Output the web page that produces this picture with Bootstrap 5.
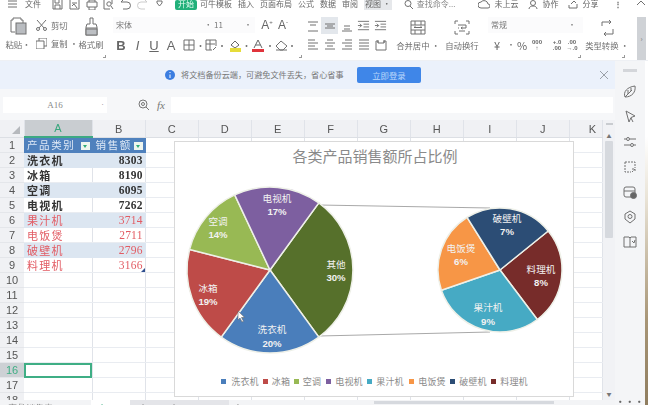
<!DOCTYPE html>
<html lang="zh"><head><meta charset="utf-8"><title>WPS 表格</title>
<link href="https://cdn.jsdelivr.net/npm/bootstrap@5.3.0/dist/css/bootstrap.min.css" rel="stylesheet">
<style>
html,body{width:648px;height:405px;overflow:hidden;margin:0;background:#fff}
body{font-family:"Noto Sans CJK SC","Liberation Sans",sans-serif;font-size:8px;color:#666;line-height:1}
.shell{width:648px;height:405px;filter:blur(.6px)}
.ic{fill:none;stroke:#707070;stroke-width:1;display:block;flex:none}
.topbar{height:10px;padding-left:8px;overflow:hidden;white-space:nowrap;align-items:flex-start;line-height:8px}
.tic{width:17px;display:flex;justify-content:center}
.tabon{width:22px;height:10px;background:#22b07a;color:#e8fff4;border-radius:2px;text-align:center;margin:0 3px 0 7px}
.tabs{gap:6px}
.hovertab{background:#e6e8eb;padding:0 1px;height:10px}
.ribbon{height:51px;border-bottom:1px solid #eef0f4}
.grp{position:relative;padding-top:7px;height:50px;flex:none}
.grp::after{content:"";position:absolute;right:2px;bottom:2px;width:3px;height:3px;border-right:1px solid #999;border-bottom:1px solid #999}
.g1{width:108px}.g2{width:196px;padding-left:5px}.g3{width:85px}.g3::after,.g4::after,.g5::after{display:none}
.g4{width:40px;margin-left:9px}.g5{width:36px;margin-left:6px}
.g6{width:95px;margin-left:8px}.g7{width:40px;margin-left:4px}
.vcol{display:flex;flex-direction:column;align-items:center}
.lab{font-size:8.4px;white-space:nowrap;color:#707070}
.paste{width:36px}.cutcol{width:42px;gap:7px;padding-top:3px}.brush{width:26px}
.cutrow{display:flex;align-items:center;gap:4px}
.fsel{height:16px;background:#fbfbfc;width:142px;padding:0 3px;display:flex;align-items:center;font-size:8px;color:#777}
.fgrow{height:16px;align-items:center}
.frow{margin-top:4px;height:16px;align-items:center}
.sq{display:flex;justify-content:center;align-items:center;height:16px;flex:none}
.w5{width:5px}.w3{width:3px}.w4{width:4px}.w6{width:6px}.w16{width:16px}.w17{width:17px}.w18{width:18px}.w20{width:20px}
.dot{font-size:9px;color:#777}
.big{font:700 13px "Liberation Sans",sans-serif;color:#666}
.thinbig{font-weight:400;font-size:12px}
.thinbig sup{font-size:6px;top:-3px}
.agrid{display:grid;grid-template-columns:repeat(5,17px);grid-auto-rows:17px;row-gap:2px;color:#707070}
.agrid div{display:flex;align-items:center;justify-content:center}
.agrid .on{background:#e3e7ec}
.numrow{height:16px;margin-top:4px;align-items:center;font-size:11px;color:#666}
.numrow span{flex:none;text-align:center}
.n1{width:20px;margin-left:-1px}.n2{width:7px;font-size:8px}.n3{width:18px;margin-left:-1px}
.tinynum{font:700 6px/6px "Liberation Sans",sans-serif;color:#666;text-align:center}
.n4{width:12px}.n5{width:16px;margin-left:6px}.n6{width:14px}
.handle{width:9px;height:43px;margin:7px 0 0 10px;background:#cfd2d6;color:#777;display:flex;align-items:center;justify-content:center;flex:none;font-size:7px}
.lower{height:344px}
.mainp{width:615px;flex:none}
.notice{height:28px;background:#ebf1fb;padding-left:165px;align-items:center}
.notice-t{font-size:8.15px;color:#777;margin:0 13px 0 6px;white-space:nowrap;width:163px}
.loginb{width:64px;height:16px;background:#3f86e8;color:#bcd8fb;border:0;border-radius:2px;font-size:8.4px;padding:0;line-height:16px}
.closex{margin-right:7px;stroke:#9aa0a8}
.formula{height:31px;background:#f6f7f9;padding:0 2px 0 3px;align-items:center}
.namebox{width:104px;height:16px;background:#fff;color:#888;font:9px "Liberation Serif",serif;position:relative;text-align:center;line-height:16px}
.namebox i{position:absolute;right:3px;top:0;font-style:normal;font-size:8px}
.zoomi{margin-left:31px;stroke:#777}
.fxi{font:italic 11px "Liberation Serif",serif;color:#777;margin:0 6px 0 8px}
.inputw{height:16px;background:#fff;flex:1}
.sheet{height:280px;position:relative;overflow:hidden}
.gridw{width:603px;overflow:hidden;flex:none}
.table.xl{table-layout:fixed;width:603px;border-collapse:collapse;margin:0;border:0;--bs-table-bg:transparent;font-size:11px}
.table.xl th,.table.xl td{padding:0;height:14.73px;line-height:14px;border:0;border-right:1px solid #e0e3e9;border-bottom:1px solid #e9ecf1;white-space:nowrap;overflow:hidden;box-shadow:none}
.table.xl thead th{height:17px;background:#f0f1f4;font:400 11px/16px "Liberation Sans",sans-serif;color:#555;text-align:center;border-bottom:1px solid #dcdfe4;border-right:1px solid #e0e3e9;position:relative}
.table.xl thead th.cura{background:#c9cdd1;color:#38a67d;border-bottom:2px solid #3da983}
.table.xl tbody th{background:#f0f1f4;font:400 11px/14px "Liberation Sans",sans-serif;color:#555;text-align:center;border-bottom:1px solid #e4e6ea;border-right:0}
.table.xl tbody th.curr{background:#cdd1d5;color:#3fae85}
.table.xl .hd{background:#4f81bd;color:#dfe9f6;padding-left:3px;letter-spacing:1.6px;font-size:10.5px;position:relative;border-color:#4f81bd}
.table.xl .hd u{position:absolute;right:2px;bottom:2px;width:9px;height:8px;background:#eef5ee;text-decoration:none}
.table.xl .hd u::after{content:"";position:absolute;left:2px;top:3px;border:2.5px solid transparent;border-top:3px solid #2faa78}
.table.xl .bd{font-weight:700;color:#333;padding-left:3px;letter-spacing:1.2px}
.table.xl .rd{color:#e25b63;padding-left:3px;letter-spacing:1.2px;font-weight:400}
.table.xl .nb{font:700 11.5px/14px "Liberation Serif",serif;color:#333;text-align:right;padding-right:2px;letter-spacing:.2px}
.table.xl .nr{font:400 11.5px/14px "Liberation Serif",serif;color:#e25b63;text-align:right;padding-right:2px;letter-spacing:.2px;position:relative}
.table.xl .crn::after{content:"";position:absolute;right:0;bottom:0;border:2px solid transparent;border-right-color:#2f4f8f;border-bottom-color:#2f4f8f}
.table.xl .st{background:#dce6f1;border-color:#dce6f1}
.table.xl .sel{outline:2px solid #3fae85;outline-offset:-2px}
.tri{position:absolute;right:4px;bottom:3px;width:0;height:0;border:4px solid transparent;border-right-color:#b6b9bd;border-bottom-color:#b6b9bd}
.table.xl thead th.kcol{padding-left:13px}
.vscroll{width:12px;background:#f1f2f5;flex:none;padding-top:3px;align-items:center;color:#777}
.grip{width:7px;height:2px;background:#c9ccd0;margin-bottom:8px}
.arr{font-size:5px;height:5px;line-height:5px}
.thumb{width:8px;height:97px;background:#d6d9de;margin-top:3px;border-radius:1px}
.sideb{width:30px;background:#f4f5f7;flex:none;padding-top:8px}
.sgrip{width:14px;height:3px;background:#d4d6da;margin-bottom:13px}
.sideicons{gap:11px}
.sdots{margin-top:auto;font-size:9px;line-height:6px;font-weight:700;color:#666;letter-spacing:.5px}
.photo{width:3px;flex:none;background:linear-gradient(#fff 22%,#e9e3d6 40%,#a89677 75%,#8f7d5f)}
.chart{position:absolute;left:174px;top:21px;width:400px;height:256px;background:#fff;border:1px solid #d9d9d9;box-sizing:border-box}
.chart svg{display:block;width:398px;height:254px}
.chart text{font-family:"Noto Sans CJK SC",sans-serif;text-anchor:middle}
.pl{font-size:9.6px;fill:#f2f2f2}
.chart text.pp{font:700 9.6px "Liberation Sans",sans-serif;fill:#f2f2f2}
.lg{font-size:9px;fill:#8a8a8a;letter-spacing:.2px}
.ttl{font-size:15px;fill:#8a8a8a}
.tabsbar{height:5px;background:#f3f4f6;overflow:hidden;align-items:flex-start;font:9px/12px "Liberation Sans",sans-serif;color:#888}
.tb1{width:91px;padding:2px 0 0 8px;white-space:nowrap;height:5px}
.tb2{width:39px;color:#3fae85;background:#fff;padding:2px 0 0 4px;height:5px}
.tb3{width:99px;background:#e4e5e9;padding:2px 0 0 6px;height:5px;white-space:nowrap}
.plus{padding:2px 0 0 6px;width:145px;font-size:10px;font-weight:700;height:5px}
.hbar{width:180px;height:3px;background:#d6d9de;margin-top:1px}
</style></head>
<body>
<div class="shell">
<svg width="0" height="0" class="position-absolute"><defs>
<symbol id="al1" viewBox="0 0 12 12"><path d="M1 2h10M3 5h6M1 11h10" fill="none" stroke="currentColor"/></symbol>
<symbol id="al2" viewBox="0 0 12 12"><path d="M1 4h10M3 6h6M1 8h10" fill="none" stroke="currentColor"/></symbol>
<symbol id="al3" viewBox="0 0 12 12"><path d="M3 6h6M3 9h6M1 11h10" fill="none" stroke="currentColor"/></symbol>
<symbol id="ind" viewBox="0 0 14 12"><path d="M1 1h12M7 4h6M7 7h6M1 10h12M1 5.500h4M3 3.500l2 2-2 2" fill="none" stroke="currentColor"/></symbol>
<symbol id="hl" viewBox="0 0 12 12"><path d="M1 1h7M1 4h10M1 7h7M1 10h10" fill="none" stroke="currentColor"/></symbol>
<symbol id="hc" viewBox="0 0 12 12"><path d="M3 1h6M1 4h10M3 7h6M1 10h10" fill="none" stroke="currentColor"/></symbol>
<symbol id="hr" viewBox="0 0 12 12"><path d="M4 1h7M1 4h10M4 7h7M1 10h10" fill="none" stroke="currentColor"/></symbol>
<symbol id="hj" viewBox="0 0 12 12"><path d="M1 1h10M1 4h10M1 7h10M1 10h10" fill="none" stroke="currentColor"/></symbol>
</defs></svg>

<div class="topbar d-flex">
<svg class="ic" width="9" height="8" viewBox="0 0 9 8"><path d="M0 1h9M0 4h9M0 7h9"/></svg>
<span class="ms-2">文件</span>
<span class="tic ms-2"><svg class="ic" width="11" height="10" viewBox="0 0 11 10"><path d="M1 0v9h9V0M3 9V5h5v4M3 0v3h4V0"/></svg></span>
<span class="tic"><svg class="ic" width="11" height="10" viewBox="0 0 11 10"><path d="M1 0v9h9V0M3 3h5M3 6l2-2 3 4"/></svg></span>
<span class="tic"><svg class="ic" width="12" height="10" viewBox="0 0 12 10"><path d="M1 2h10v5H1zM3 7v3h6V7M3 2V0h6v2"/></svg></span>
<span class="tic"><svg class="ic" width="11" height="10" viewBox="0 0 11 10"><path d="M1 0v9h6M9 0v4"/><circle cx="6" cy="4" r="2.200"/><path d="M8 6l2 3"/></svg></span>
<span class="tic"><svg class="ic" width="11" height="10" viewBox="0 0 11 10"><path d="M3 0L1 2h6a3 3 0 0 1 0 7H3"/></svg></span>
<span class="tic"><svg class="ic redo" width="11" height="10" viewBox="0 0 11 10"><path stroke="#ccc" d="M8 0l2 2H4a3 3 0 0 0 0 7h4"/></svg></span>
<span class="tic"><svg class="ic" width="7" height="7" viewBox="0 0 7 7"><path d="M1 1h5v2L3.500 6 1 3z"/></svg></span>
<span class="tabon">开始</span>
<div class="d-flex tabs"><span>可牛模板</span><span>插入</span><span>页面布局</span><span>公式</span><span>数据</span><span>审阅</span><span class="hovertab">视图 ·</span></div>
<svg class="ic" style="margin-left:12px" width="9" height="9" viewBox="0 0 9 9"><circle cx="4" cy="3.500" r="3"/><path d="M6 6l3 3"/></svg>
<span class="ms-1 text-black-50">查找命令...</span>
<svg class="ic" style="margin-left:23px" width="12" height="9" viewBox="0 0 12 9"><path d="M3 8a3 3 0 0 1 0-6 4 4 0 0 1 7 2 2 2 0 0 1 0 4z"/></svg>
<span class="ms-1">未上云</span>
<svg class="ic" style="margin-left:10px" width="10" height="9" viewBox="0 0 10 9"><circle cx="5" cy="3" r="2.500"/><path d="M1 9c0-4 8-4 8 0"/></svg>
<span class="ms-1">协作</span>
<svg class="ic" style="margin-left:10px" width="10" height="9" viewBox="0 0 10 9"><path d="M1 5v3h8V4M3 4l3-3 2 2"/></svg>
<span class="ms-1">分享</span>
<span class="fw-bold" style="margin-left:16px">⋮</span>
<svg class="ic" style="margin-left:14px" width="10" height="6" viewBox="0 0 10 6"><path d="M1 5l4-4 4 4"/></svg>
</div>

<div class="ribbon d-flex">
<div class="grp g1 d-flex">
 <div class="vcol paste"><svg class="ic mt-0" width="17" height="18" viewBox="0 0 17 18"><path d="M3 3H1v12h4M3 3V1h8v2h2v3"/><rect x="6" y="6" width="10" height="11" fill="#b9bcc0"/></svg><span class="lab" style="margin-top:5px">粘贴·</span></div>
 <div class="vcol cutcol align-items-start">
  <div class="cutrow"><svg class="ic" width="11" height="11" viewBox="0 0 11 11"><path d="M1 0l7 8M10 0L3 8"/><circle cx="2" cy="9" r="1.500"/><circle cx="9" cy="9" r="1.500"/></svg><span class="lab">剪切</span></div>
  <div class="cutrow"><svg class="ic" width="11" height="11" viewBox="0 0 11 11"><path d="M3 3V0h8v8H8M0 3h8v8H0z"/></svg><span class="lab">复制 ·</span></div>
 </div>
 <div class="vcol brush"><svg class="ic" width="13" height="19" viewBox="0 0 13 19"><path d="M5 1h3v6h3l1 3v8H1v-8l1-3h3zM1 11h11"/><rect x="1" y="12" width="11" height="6" fill="#bcbfc3"/></svg><span class="lab" style="margin-top:4px">格式刷</span></div>
</div>
<div class="grp g2">
 <div class="d-flex fgrow"><div class="fsel"><span>宋体</span><span class="ms-auto">· 11</span><span style="margin-left:21px">·</span></div>
  <span class="sq w16 big thinbig ms-1">A<sup>+</sup></span><span class="sq w16 big thinbig">A<sup>-</sup></span></div>
 <div class="d-flex frow">
  <span class="sq w16 big">B</span><span class="sq w17 big fst-italic fw-normal">I</span><span class="sq w16 big fw-normal text-decoration-underline">U</span><span class="sq w18 big fw-normal">A</span>
  <span class="sq w18"><svg class="ic" width="12" height="12" viewBox="0 0 12 12"><path d="M1 1h10v10H1zM6 1v10M1 6h10"/></svg></span><span class="sq w5 dot">·</span>
  <span class="sq w16"><svg class="ic" width="12" height="12" viewBox="0 0 12 12"><path d="M1 1h10v6M1 1v10h6M1 5h9M5 1v10"/><path d="M8 11l3-3"/></svg></span><span class="sq w6 dot">·</span>
  <span class="sq w20"><svg width="13" height="13" viewBox="0 0 13 13"><path d="M2 6l4-4 4 4-4 3z" fill="none" stroke="#666"/><rect x="1" y="9" width="11" height="4" fill="#e6dc3a"/></svg></span><span class="sq w3 dot">·</span>
  <span class="sq w20"><svg width="12" height="13" viewBox="0 0 12 13"><path d="M2 9l4-8 4 8M3.500 6h5" fill="none" stroke="#666"/><rect x="0" y="10" width="12" height="3" fill="#e0343c"/></svg></span><span class="sq w4 dot">·</span>
  <span class="sq w18"><svg class="ic" width="13" height="11" viewBox="0 0 13 11"><path d="M1 6l5-5 6 5-4 4H5zM1 10h11"/></svg></span><span class="sq w4 dot">·</span>
 </div>
</div>
<div class="grp g3"><div class="agrid">
 <div><svg width="12" height="12"><use href="#al1"/></svg></div><div class="on"><svg width="12" height="12"><use href="#al2"/></svg></div><div><svg width="12" height="12"><use href="#al3"/></svg></div><div><svg width="13" height="12"><use href="#ind"/></svg></div><div><svg width="13" height="12"><use href="#ind"/></svg></div>
 <div><svg width="12" height="12"><use href="#hl"/></svg></div><div><svg width="12" height="12"><use href="#hc"/></svg></div><div><svg width="12" height="12"><use href="#hr"/></svg></div><div><svg width="12" height="12"><use href="#hj"/></svg></div><div><svg class="ic" width="12" height="12" viewBox="0 0 12 12"><path d="M1 2h2v2h6V2h2v9H1zM3 1v3M9 1v3"/></svg></div>
</div></div>
<div class="grp g4 vcol"><svg class="ic" style="margin-top:3px" width="16" height="15" viewBox="0 0 16 15"><path d="M1 1h14v13H1zM1 5h14M1 10h14M4 7.500h8M4 7.500l1.500-1.200M12 7.500l-1.500-1.200M5 1v4M11 1v4M5 10v4M11 10v4"/></svg><span class="lab" style="margin-top:6px">合并居中 ·</span></div>
<div class="grp g5 vcol"><svg class="ic" style="margin-top:3px" width="16" height="15" viewBox="0 0 16 15"><path d="M1 4V1h3M12 1h3v3M1 11v3h3M12 14h3v-3M4 5h8v3H7M4 8h1M7 8l1.500-1M7 8l1.500 1M5 11h6"/></svg><span class="lab" style="margin-top:6px">自动换行</span></div>
<div class="grp g6">
 <div class="fsel w-100">常规<span class="ms-auto me-1">·</span></div>
 <div class="d-flex numrow"><span class="n1">¥</span><span class="n2">·</span><span class="n3">%</span><span class="tinynum n4">000<br>↑</span><span class="tinynum n5">+.0<br>.00</span><span class="tinynum n6">.00<br>→.0</span></div>
</div>
<div class="grp g7 vcol"><svg class="ic" style="margin-top:3px" width="15" height="16" viewBox="0 0 15 16"><path d="M2 6V2h9M9 0l2 2-2 2M13 9v5H4M6 12l-2 2 2 2"/></svg><span class="lab" style="margin-top:5px">类型转换 ·</span></div>
<div class="handle">›</div>
</div>

<div class="lower d-flex">
<div class="mainp">
 <div class="notice d-flex">
  <svg width="10" height="10" viewBox="0 0 10 10" class="flex-shrink-0"><circle cx="5" cy="5" r="5" fill="#3b7de0"/><path d="M5 2v1M5 4.500V8" stroke="#fff"/></svg>
  <span class="notice-t">将文档备份云端，可避免文件丢失，省心省事</span>
  <button type="button" class="btn loginb">立即登录</button>
  <svg class="ic ms-auto closex" width="8" height="8" viewBox="0 0 8 8"><path d="M0 0l8 8M8 0L0 8"/></svg>
 </div>
 <div class="formula d-flex">
  <div class="namebox">A16<i>·</i></div>
  <svg class="ic zoomi" width="11" height="11" viewBox="0 0 11 11"><circle cx="5" cy="5" r="4"/><circle cx="5" cy="5" r="1.500"/><path d="M8 8l3 3"/></svg>
  <span class="fxi">fx</span>
  <div class="inputw"></div>
 </div>
 <div class="sheet d-flex">
  <div class="gridw">
  <table class="table xl">
  <colgroup><col style="width:24px"><col style="width:68px"><col style="width:53px"><col style="width:53px"><col style="width:53px"><col style="width:53px"><col style="width:53px"><col style="width:53px"><col style="width:53px"><col style="width:53px"><col style="width:53px"><col style="width:33px"></colgroup>
  <thead><tr><th><span class="tri"></span></th><th class="cura">A</th><th>B</th><th>C</th><th>D</th><th>E</th><th>F</th><th>G</th><th>H</th><th>I</th><th>J</th><th class="kcol">K</th></tr></thead>
  <tbody>
  <tr><th>1</th><td class="hd">产品类别<u></u></td><td class="hd">销售额<u></u></td><td></td><td></td><td></td><td></td><td></td><td></td><td></td><td></td><td></td></tr>
  <tr><th>2</th><td class="bd st">洗衣机</td><td class="nb st">8303</td><td></td><td></td><td></td><td></td><td></td><td></td><td></td><td></td><td></td></tr>
  <tr><th>3</th><td class="bd">冰箱</td><td class="nb">8190</td><td></td><td></td><td></td><td></td><td></td><td></td><td></td><td></td><td></td></tr>
  <tr><th>4</th><td class="bd st">空调</td><td class="nb st">6095</td><td></td><td></td><td></td><td></td><td></td><td></td><td></td><td></td><td></td></tr>
  <tr><th>5</th><td class="bd">电视机</td><td class="nb">7262</td><td></td><td></td><td></td><td></td><td></td><td></td><td></td><td></td><td></td></tr>
  <tr><th>6</th><td class="rd st">果汁机</td><td class="nr st">3714</td><td></td><td></td><td></td><td></td><td></td><td></td><td></td><td></td><td></td></tr>
  <tr><th>7</th><td class="rd">电饭煲</td><td class="nr">2711</td><td></td><td></td><td></td><td></td><td></td><td></td><td></td><td></td><td></td></tr>
  <tr><th>8</th><td class="rd st">破壁机</td><td class="nr st">2796</td><td></td><td></td><td></td><td></td><td></td><td></td><td></td><td></td><td></td></tr>
  <tr><th>9</th><td class="rd">料理机</td><td class="nr crn">3166</td><td></td><td></td><td></td><td></td><td></td><td></td><td></td><td></td><td></td></tr>
  <tr><th>10</th><td></td><td></td><td></td><td></td><td></td><td></td><td></td><td></td><td></td><td></td><td></td></tr>
  <tr><th>11</th><td></td><td></td><td></td><td></td><td></td><td></td><td></td><td></td><td></td><td></td><td></td></tr>
  <tr><th>12</th><td></td><td></td><td></td><td></td><td></td><td></td><td></td><td></td><td></td><td></td><td></td></tr>
  <tr><th>13</th><td></td><td></td><td></td><td></td><td></td><td></td><td></td><td></td><td></td><td></td><td></td></tr>
  <tr><th>14</th><td></td><td></td><td></td><td></td><td></td><td></td><td></td><td></td><td></td><td></td><td></td></tr>
  <tr><th>15</th><td></td><td></td><td></td><td></td><td></td><td></td><td></td><td></td><td></td><td></td><td></td></tr>
  <tr><th class="curr">16</th><td class="sel"></td><td></td><td></td><td></td><td></td><td></td><td></td><td></td><td></td><td></td><td></td></tr>
  <tr><th>17</th><td></td><td></td><td></td><td></td><td></td><td></td><td></td><td></td><td></td><td></td><td></td></tr>
  <tr><th>18</th><td></td><td></td><td></td><td></td><td></td><td></td><td></td><td></td><td></td><td></td><td></td></tr>
  </tbody></table>
  </div>
  <div class="vscroll d-flex flex-column"><div class="grip"></div><span class="arr">▲</span><div class="thumb"></div><span class="arr mt-auto mb-1">▼</span></div>
  <div class="chart">
  <svg viewBox="175 142 398 254">
   <text class="ttl" x="375" y="162">各类产品销售额所占比例</text>
   <path d="M319 205L490 208M319 336L490 332" stroke="#a9a9a9" stroke-width="1.200" fill="none"/>
   <g stroke="#eef0e8" stroke-width="1.500">
   <path d="M270 270L318.800 202.900A83 83 0 0 1 318.800 337.100Z" fill="#56702b"/>
   <path d="M270 270L318.800 337.100A83 83 0 0 1 221.200 337.100Z" fill="#4a7ebb"/>
   <path d="M270 270L221.200 337.100A83 83 0 0 1 189.600 249.400Z" fill="#be4b48"/>
   <path d="M270 270L189.600 249.400A83 83 0 0 1 234.700 194.900Z" fill="#98b954"/>
   <path d="M270 270L234.700 194.900A83 83 0 0 1 318.800 202.900Z" fill="#7d5fa0"/>
   <path d="M500 270L548.200 231A62 62 0 0 1 537.300 319.500Z" fill="#772c2a"/>
   <path d="M500 270L537.300 319.500A62 62 0 0 1 441.400 290.200Z" fill="#46aac4"/>
   <path d="M500 270L441.400 290.200A62 62 0 0 1 467.100 217.400Z" fill="#f79646"/>
   <path d="M500 270L467.100 217.400A62 62 0 0 1 548.200 231Z" fill="#2c4d75"/>
   </g>
   <text class="pl" x="277" y="202">电视机</text><text class="pp" x="277" y="215">17%</text>
   <text class="pl" x="218" y="225">空调</text><text class="pp" x="218" y="238">14%</text>
   <text class="pl" x="208" y="292">冰箱</text><text class="pp" x="208" y="305">19%</text>
   <text class="pl" x="272" y="333">洗衣机</text><text class="pp" x="272" y="347">20%</text>
   <text class="pl" x="336" y="268">其他</text><text class="pp" x="336" y="281">30%</text>
   <text class="pl" x="507" y="222">破壁机</text><text class="pp" x="507" y="235">7%</text>
   <text class="pl" x="461" y="252">电饭煲</text><text class="pp" x="461" y="265">6%</text>
   <text class="pl" x="541" y="273">料理机</text><text class="pp" x="541" y="286">8%</text>
   <text class="pl" x="488" y="311">果汁机</text><text class="pp" x="488" y="325">9%</text>
   <path d="M238 311l0 9 2-2 2 4 1.500-.8-2-3.700 3-.2z" fill="#fff" stroke="#666" stroke-width=".6"/>
   <rect x="221" y="379" width="5" height="5" fill="#4a7ebb"/><text class="lg" x="245" y="385">洗衣机</text>
   <rect x="263" y="379" width="5" height="5" fill="#be4b48"/><text class="lg" x="281" y="385">冰箱</text>
   <rect x="294" y="379" width="5" height="5" fill="#98b954"/><text class="lg" x="312" y="385">空调</text>
   <rect x="326" y="379" width="5" height="5" fill="#7d5fa0"/><text class="lg" x="349" y="385">电视机</text>
   <rect x="367" y="379" width="5" height="5" fill="#46aac4"/><text class="lg" x="390" y="385">果汁机</text>
   <rect x="409" y="379" width="5" height="5" fill="#f79646"/><text class="lg" x="432" y="385">电饭煲</text>
   <rect x="450" y="379" width="5" height="5" fill="#2c4d75"/><text class="lg" x="473" y="385">破壁机</text>
   <rect x="491" y="379" width="5" height="5" fill="#772c2a"/><text class="lg" x="514" y="385">料理机</text>
  </svg>
  </div>
 </div>
 <div class="tabsbar d-flex"><span class="tb1">产品销售表</span><span class="tb2">Sheet1</span><span class="tb3">Sheet2 Sheet3</span><span class="plus">+</span><div class="hbar"></div></div>
</div>
<div class="sideb vcol">
 <div class="sgrip"></div>
 <div class="vcol sideicons">
 <svg class="ic" width="14" height="14" viewBox="0 0 14 14"><path d="M2 12C0 7 4 2 12 1c1 6-3 11-10 11zM2 12l7-7M5 5v4M8 3v3"/></svg>
 <svg class="ic" width="14" height="14" viewBox="0 0 14 14"><path d="M3 1l9 5-4 1.500L6 12z"/><path d="M8 8l2 4"/></svg>
 <svg class="ic" width="14" height="14" viewBox="0 0 14 14"><path d="M1 4h2M7 4h6M1 10h6M11 10h2"/><circle cx="5" cy="4" r="1.500"/><circle cx="9" cy="10" r="1.500"/></svg>
 <svg class="ic" stroke-dasharray="2 1" width="14" height="14" viewBox="0 0 14 14"><path d="M2 2h10v6M2 2v10h6M9 12l3-3M9 9h3v3"/></svg>
 <svg class="ic" width="14" height="14" viewBox="0 0 14 14"><rect x="1" y="2" width="11" height="10" rx="2"/><path d="M1 6h11"/><circle cx="10.500" cy="10.500" r="3" fill="#666"/></svg>
 <svg class="ic" width="14" height="14" viewBox="0 0 14 14"><path d="M7 1l5 3v5l-5 4-5-4V4z"/><circle cx="7" cy="6.500" r="2"/></svg>
 <svg class="ic" width="14" height="14" viewBox="0 0 14 14"><path d="M1 2h5l1 1 1-1h5v10H1zM7 3v9"/><path d="M9 6l2 2 1-3"/></svg>
 </div>
 <div class="sdots">•••</div>
</div>
<div class="photo"></div>
</div>
</div>
</body></html>
